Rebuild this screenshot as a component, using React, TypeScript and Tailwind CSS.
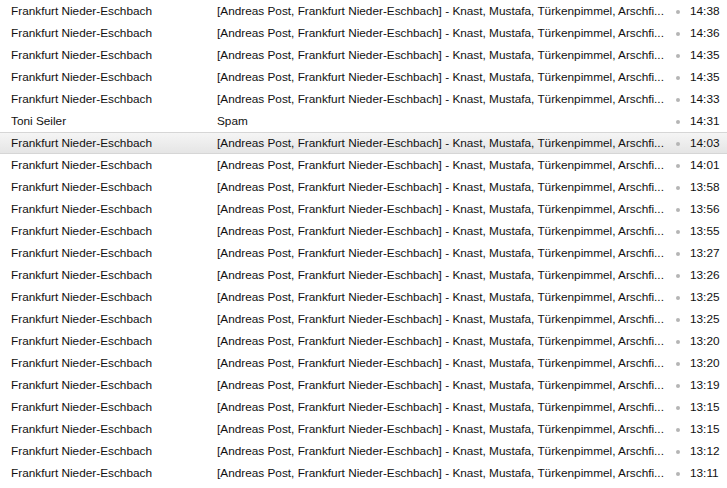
const rows: { from: string; subject: string; time: string }[] = [
  ['Frankfurt Nieder-Eschbach', '14:38'],
  ['Frankfurt Nieder-Eschbach', '14:36'],
  ['Frankfurt Nieder-Eschbach', '14:35'],
  ['Frankfurt Nieder-Eschbach', '14:35'],
  ['Frankfurt Nieder-Eschbach', '14:33'],
  ['Toni Seiler', '14:31'],
  ['Frankfurt Nieder-Eschbach', '14:03'],
  ['Frankfurt Nieder-Eschbach', '14:01'],
  ['Frankfurt Nieder-Eschbach', '13:58'],
  ['Frankfurt Nieder-Eschbach', '13:56'],
  ['Frankfurt Nieder-Eschbach', '13:55'],
  ['Frankfurt Nieder-Eschbach', '13:27'],
  ['Frankfurt Nieder-Eschbach', '13:26'],
  ['Frankfurt Nieder-Eschbach', '13:25'],
  ['Frankfurt Nieder-Eschbach', '13:25'],
  ['Frankfurt Nieder-Eschbach', '13:20'],
  ['Frankfurt Nieder-Eschbach', '13:20'],
  ['Frankfurt Nieder-Eschbach', '13:19'],
  ['Frankfurt Nieder-Eschbach', '13:15'],
  ['Frankfurt Nieder-Eschbach', '13:15'],
  ['Frankfurt Nieder-Eschbach', '13:12'],
  ['Frankfurt Nieder-Eschbach', '13:11'],
].map(([from, time]) => ({
  from,
  time,
  subject:
    from === 'Toni Seiler'
      ? 'Spam'
      : '[Andreas Post, Frankfurt Nieder-Eschbach] - Knast, Mustafa, Türkenpimmel, Arschfi...',
}));

const SELECTED = 6;

export default function App() {
  return (
    <div className="w-[727px] h-[488px] overflow-hidden bg-white font-['Liberation_Sans',Arial,sans-serif] text-[11.8px] text-[#111]">
      {rows.map((row, i) => (
        <div
          key={i}
          className={
            'flex items-center h-[22px] pt-px ' +
            (i === SELECTED
              ? 'bg-gradient-to-b from-[#f5f5f5] to-[#e5e5e5] border-y border-[#d6d6d6]'
              : '')
          }
        >
          <div className="w-[217px] pl-[11px] truncate">{row.from}</div>
          <div className="w-[455px] truncate">{row.subject}</div>
          <div className="w-[12px] flex justify-center">
            <span className="w-[4px] h-[4px] rounded-full bg-[#b5b5b5]" />
          </div>
          <div className="flex-1 pl-[6px]">{row.time}</div>
        </div>
      ))}
    </div>
  );
}
